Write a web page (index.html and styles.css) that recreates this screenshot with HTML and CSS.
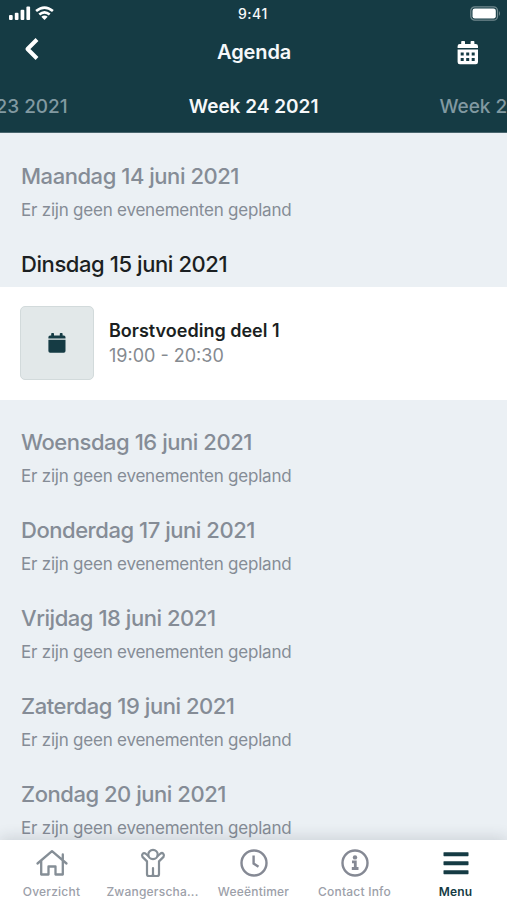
FILE: index.html
```html
<!DOCTYPE html>
<html lang="nl">
<head>
<meta charset="utf-8">
<title>Agenda</title>
<link rel="stylesheet" href="styles.css">
</head>
<body>
<div class="app">
  <header class="header">
    <div class="status">
      <div class="signal">
        <svg width="22" height="14" viewBox="0 0 22 14" fill="#fff"><rect x="0" y="9" width="3.700" height="5" rx="1"/><rect x="5.8" y="6.7" width="3.700" height="7.3" rx="1"/><rect x="11.6" y="3.8" width="3.700" height="10.2" rx="1"/><rect x="17.4" y="0.5" width="3.700" height="13.5" rx="1"/></svg>
        <svg width="19" height="14" viewBox="0 0 19 14" fill="none" stroke="#fff" stroke-width="2.6"><path d="M1.1 5.1Q9.5-2 17.9 5.1M4.3 8.6Q9.5 4.1 14.7 8.6"/><path d="M6.3 10.7Q9.5 8.3 12.7 10.7L9.5 13.9Z" fill="#fff" stroke="none"/></svg>
      </div>
      <span class="time">9:41</span>
      <svg class="battery" width="31" height="15" viewBox="0 0 31 15"><rect x=".8" y=".8" width="26.7" height="13.4" rx="4" fill="none" stroke="#71898e" stroke-width="1.3"/><rect x="2.5" y="2.5" width="23.3" height="10" rx="2.3" fill="#fff"/><path d="M29 5Q31 7.5 29 10Z" fill="#71898e"/></svg>
    </div>
    <div class="nav">
      <svg class="back" width="16" height="24" viewBox="0 0 16 24" fill="none" stroke="#fff" stroke-width="4"><path d="M13 2.5L3.5 12 13 21.5" stroke-linejoin="round"/></svg>
      <h1>Agenda</h1>
      <svg class="cal" width="22" height="24" viewBox="0 0 22 24"><path d="M5 0h2.2q.8 0 .8.8V3h5.600V.8q0-.8.8-.8h2.200q.8 0 .8.8V3h1.400q2.200 0 2.200 2.200V7H.6V5.200Q.6 3 2.800 3H4.200V.8Q4.200 0 5 0ZM.6 8.600H21V21q0 2.300-2.200 2.300H2.800Q.6 23.300.6 21Z" fill="#fff"/><path d="M3.700 11.500h3v3h-3zM9.200 11.500h3v3h-3zM14.700 11.500h3v3h-3zM3.700 17h3v3h-3zM9.200 17h3v3h-3zM14.700 17h3v3h-3z" fill="#153b44"/></svg>
    </div>
    <div class="weeks"><span class="prev">Week 23 2021</span><span class="current">Week 24 2021</span><span class="next">Week 25 2021</span></div>
  </header>
  <main class="days">
    <section class="day"><h2>Maandag 14 juni 2021</h2><p>Er zijn geen evenementen gepland</p></section>
    <section class="day active"><h2>Dinsdag 15 juni 2021</h2>
      <article class="event">
        <div class="thumb"><svg width="18" height="20" viewBox="0 0 18 20" fill="#153b44"><path d="M4 0h1.200q.8 0 .8.8V2.500h5.800V.8q0-.8.8-.8h1.200q.8 0 .8.8v1.700h1.200q1.700 0 1.700 1.700v1.300H.4V4.200q0-1.700 1.700-1.700h1.100V.8Q3.200 0 4 0ZM.4 6.800h17.100V18q0 1.700-1.700 1.700H2.100Q.4 19.700.4 18Z"/></svg></div>
        <div class="info"><h3>Borstvoeding deel 1</h3><span>19:00 - 20:30</span></div>
      </article>
    </section>
    <section class="day"><h2>Woensdag 16 juni 2021</h2><p>Er zijn geen evenementen gepland</p></section>
    <section class="day"><h2>Donderdag 17 juni 2021</h2><p>Er zijn geen evenementen gepland</p></section>
    <section class="day"><h2>Vrijdag 18 juni 2021</h2><p>Er zijn geen evenementen gepland</p></section>
    <section class="day"><h2>Zaterdag 19 juni 2021</h2><p>Er zijn geen evenementen gepland</p></section>
    <section class="day"><h2>Zondag 20 juni 2021</h2><p>Er zijn geen evenementen gepland</p></section>
  </main>
  <nav class="tabs">
    <a class="tab"><svg width="34" height="30" viewBox="0 0 34 30" fill="none" stroke="#858e96" stroke-width="2.300" stroke-linecap="round" stroke-linejoin="round"><path d="M2.500 15.500L17 3.200 31.500 15.500M6.200 13V26.500H13.500V18.500H20.500V26.500H27.800V13M27.800 11.500V6.500"/></svg><span>Overzicht</span></a>
    <a class="tab"><svg width="34" height="30" viewBox="0 0 34 30" fill="none" stroke="#858e96" stroke-width="2.200" stroke-linecap="round" stroke-linejoin="round"><circle cx="17" cy="6.500" r="4.700"/><path d="M12.300 8L9.400 5.500Q7.900 4.500 6.700 5.700T6.500 8.900L11 13.400V26.200Q11 28 13 28H15.100Q17 28 17 26.200V20V26.200Q17 28 18.900 28H21Q23 28 23 26.200V13.400L27.500 8.900Q28.500 7 27.300 5.700T24.600 5.500L21.700 8"/></svg><span>Zwangerscha...</span></a>
    <a class="tab"><svg width="34" height="30" viewBox="0 0 34 30" fill="none" stroke="#858994" stroke-width="2.400"><circle cx="17" cy="15" r="12.500"/><path d="M16.600 7.500V15.500L21.500 18.800"/></svg><span>Weeëntimer</span></a>
    <a class="tab"><svg width="34" height="30" viewBox="0 0 34 30" fill="none" stroke="#858994" stroke-width="2.400"><circle cx="17" cy="15" r="12.500"/><circle cx="17" cy="9.400" r="2.200" fill="#858994" stroke="none"/><path d="M14 13.800H17.300V20.500M13.800 20.500H20.500" stroke-width="2.800"/></svg><span>Contact Info</span></a>
    <a class="tab selected"><svg width="34" height="30" viewBox="0 0 34 30" fill="#153b44"><rect x="4.500" y="4.200" width="25" height="4" rx=".6"/><rect x="4.500" y="13.200" width="25" height="4" rx=".6"/><rect x="4.500" y="22.200" width="25" height="4" rx=".6"/></svg><span>Menu</span></a>
  </nav>
</div>
</body>
</html>
```
FILE: styles.css
```css
* { box-sizing: border-box; }
body { margin: 0; font-family: Inter, "Liberation Sans", sans-serif; color: #1b1f22; }
h1, h2, h3, p { margin: 0; }
svg { display: block; flex: none; }
.app { height: 900px; display: flex; flex-direction: column; overflow: hidden; background: #ebf0f4; }
.header { flex: none; height: 133px; background: #153b44; color: #f5f8fa; overflow: hidden; border-bottom: 1px solid #49666e; }
.status { height: 27px; padding: 0 6px 0 9px; display: grid; grid-template-columns: 229px auto 1fr; align-items: center; }
.signal { display: flex; gap: 4px; }
.signal svg { margin-top: -1px; }
.time { font-size: 14px; font-weight: 500; letter-spacing: .5px; }
.battery { justify-self: end; }
.nav { height: 52px; padding: 0 28px 0 24px; display: grid; grid-template-columns: 193px auto 1fr; align-items: center; }
.back { margin-top: -8px; }
.cal { justify-self: end; margin-top: -1px; }
h1 { font-size: 20px; line-height: 28px; font-weight: 600; letter-spacing: -.1px; margin-top: -2px; }
.weeks { height: 54px; display: flex; justify-content: center; align-items: center; gap: 121px; white-space: nowrap; font-size: 19px; font-weight: 600; }
.prev, .next { color: #8199a1; font-weight: 500; }
.days { flex: 1; min-height: 0; overflow: hidden; padding-top: 28.5px; }
.day { height: 88px; padding-left: 21px; color: #858c96; }
.day h2 { font-size: 22px; line-height: 28px; font-weight: 500; letter-spacing: -.46px; }
.day p { margin-top: 10px; font-size: 17px; line-height: 20px; letter-spacing: -.22px; }
.day.active { height: auto; padding-left: 0; margin-bottom: 28px; }
.active h2 { padding-left: 21px; color: #1b1f22; letter-spacing: -.42px; }
.event { height: 113px; margin-top: 9px; padding: 0 20px; background: #fff; display: flex; align-items: center; gap: 15px; }
.thumb { width: 74px; height: 74px; margin-top: -1px; border: 1px solid #d2dadb; border-radius: 5px; background: #e2e8e9; display: grid; place-items: center; }
.info h3 { font-size: 18px; line-height: 24px; font-weight: 600; color: #1b1f22; }
.info span { display: block; font-size: 18px; line-height: 25px; color: #858a90; }
.tabs { position: relative; flex: none; height: 60px; padding: 0 1px; display: grid; grid-template-columns: repeat(5, 1fr); background: #fff; box-shadow: 0 -2px 14px rgba(40, 45, 65, .16); }
.tab { display: flex; flex-direction: column; align-items: center; padding-top: 8px; color: #9ca0a9; font-size: 12px; line-height: 16px; font-weight: 500; letter-spacing: .22px; white-space: nowrap; }
.tab span { margin-top: 6px; }
.selected { color: #153b44; font-weight: 600; }
```
